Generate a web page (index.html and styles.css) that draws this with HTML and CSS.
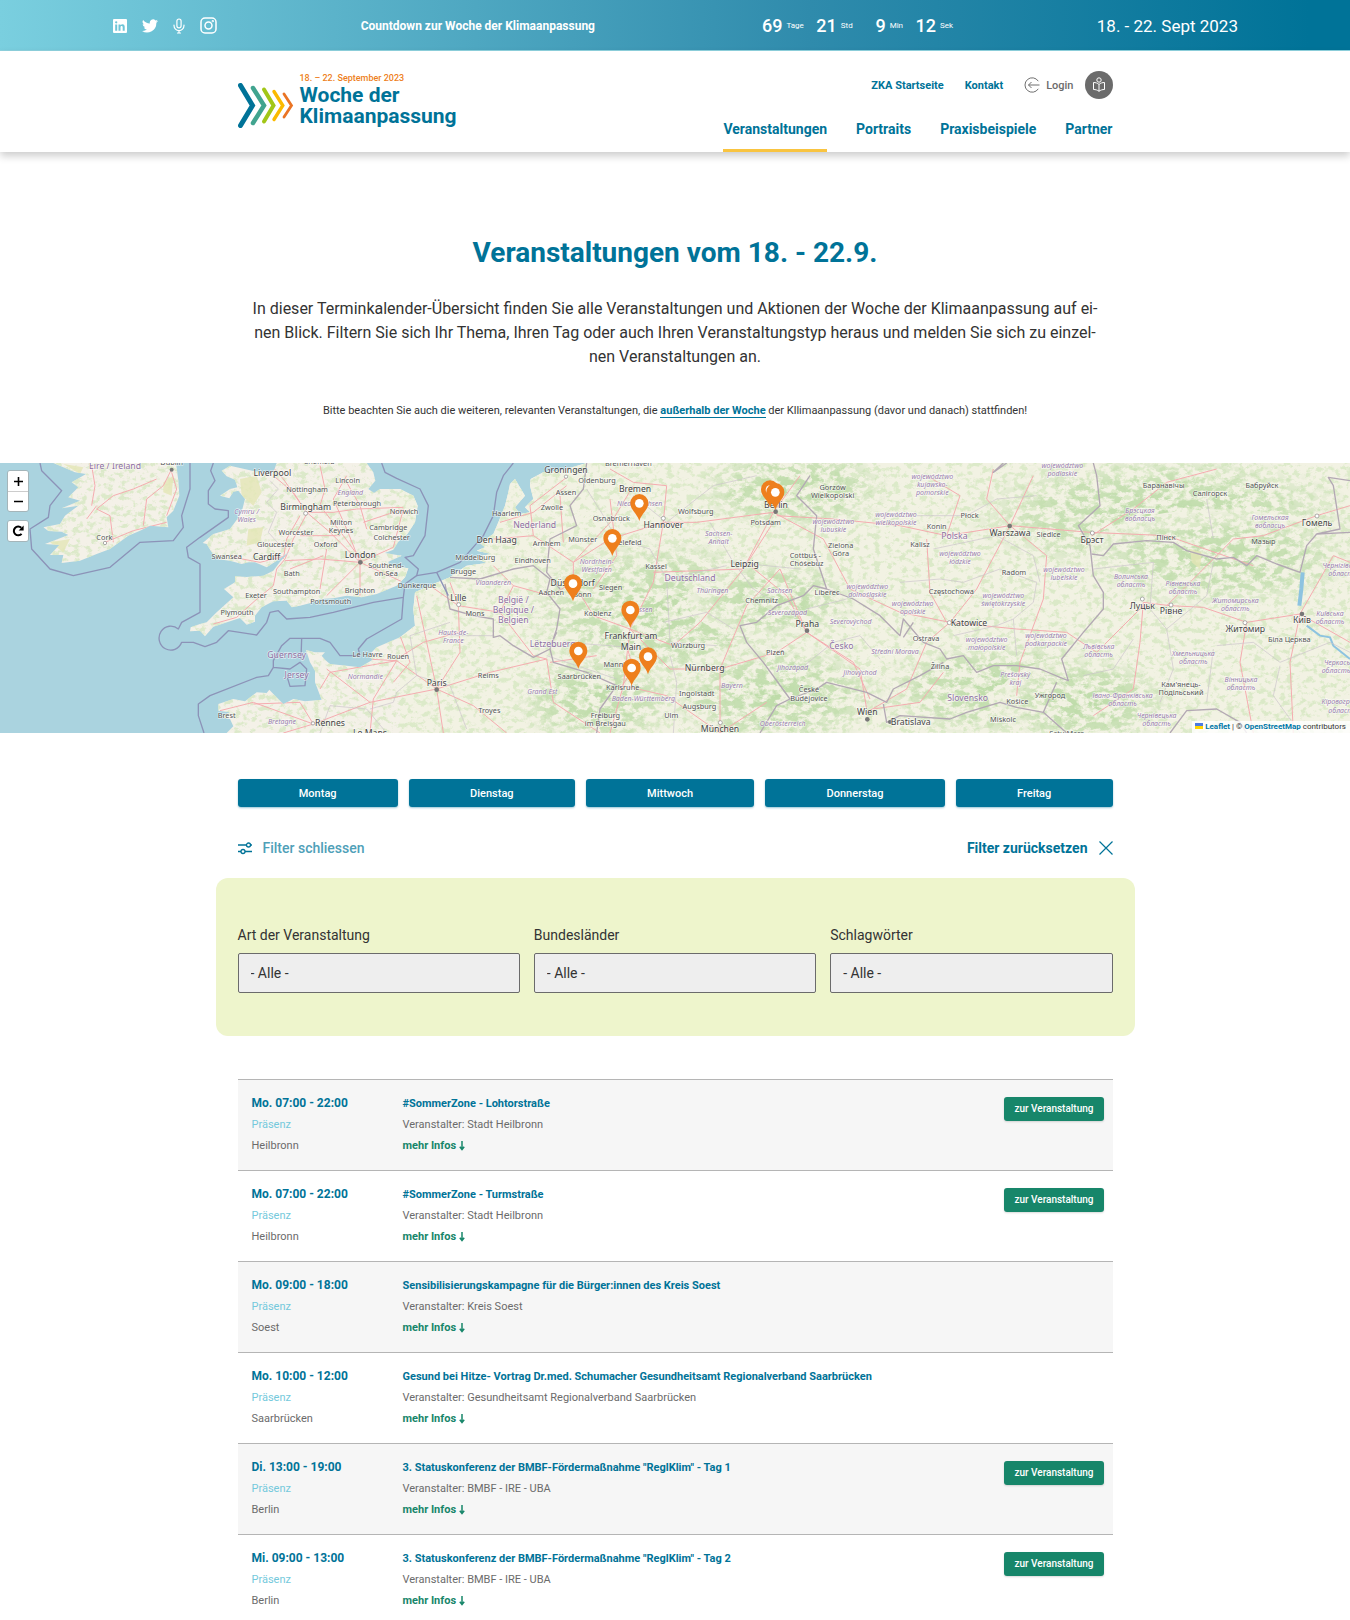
FILE: index.html
```html
<!DOCTYPE html>
<html lang="de">
<head>
<meta charset="utf-8">
<meta name="viewport" content="width=device-width, initial-scale=1">
<title>Veranstaltungen – Woche der Klimaanpassung</title>
<link rel="stylesheet" href="styles.css">
</head>
<body>
<div class="topbar">
  <div class="social">
    <a href="#" aria-label="LinkedIn"><svg width="14" height="14" viewBox="0 0 14 14"><path fill="#fff" fill-rule="evenodd" d="M1 0h12a1 1 0 0 1 1 1v12a1 1 0 0 1-1 1H1a1 1 0 0 1-1-1V1a1 1 0 0 1 1-1ZM2.2 5.4v6.400h2V5.400ZM3.200 2.200a1.150 1.150 0 1 0 0 2.300a1.150 1.150 0 1 0 0-2.300ZM5.500 5.400v6.400h2V8.300c0-1.700 2.200-1.800 2.200 0v3.500h2V7.700c0-3-3-3.100-4.200-1.500v-.8Z"/></svg></a>
    <a href="#" aria-label="Twitter"><svg width="16" height="14" viewBox="0 0 24 20"><path fill="#fff" d="M24 2.400a9.800 9.800 0 0 1-2.800.8A4.900 4.900 0 0 0 23.300.5a9.900 9.900 0 0 1-3.100 1.200 4.900 4.900 0 0 0-8.400 4.500A14 14 0 0 1 1.700 1a4.900 4.900 0 0 0 1.500 6.600 4.900 4.900 0 0 1-2.200-.6 4.900 4.900 0 0 0 3.900 4.900 5 5 0 0 1-2.200.1 4.900 4.900 0 0 0 4.600 3.400A9.900 9.900 0 0 1 0 17.500 14 14 0 0 0 21.500 5a10 10 0 0 0 2.500-2.600Z"/></svg></a>
    <a href="#" aria-label="Podcast"><svg width="12" height="16" viewBox="0 0 12 16" fill="none" stroke="#fff" stroke-width="1.200" stroke-linecap="round"><rect x="3.900" y="1" width="4.200" height="8.800" rx="2.100"/><path d="M1 7v.6a5 5 0 0 0 10 0V7M6 12.600V15M4.500 15h3"/></svg></a>
    <a href="#" aria-label="Instagram"><svg width="17" height="17" viewBox="0 0 17 17" fill="none" stroke="#fff" stroke-width="1.500"><rect x="1" y="1" width="15" height="15" rx="4"/><circle cx="8.500" cy="8.500" r="3.500"/><circle cx="12.800" cy="4.200" r=".4"/></svg></a>
  </div>
  <strong class="claim">Countdown zur Woche der Klimaanpassung</strong>
  <div class="countdown">
    <span><b>69</b><small>Tage</small></span>
    <span><b>21</b><small>Std</small></span>
    <span><b>9</b><small>Min</small></span>
    <span><b>12</b><small>Sek</small></span>
  </div>
  <span class="date">18. - 22. Sept 2023</span>
</div>

<header class="header">
  <div class="wrap header-in">
    <a class="logo" href="#">
      <svg width="56" height="45" viewBox="0 0 56 45" fill="none" stroke-linecap="round" stroke-linejoin="miter">
        <path stroke="#007398" stroke-width="5" d="M2.500 2.500 14.500 22.500 2.500 42.500"/>
        <path stroke="#41a48f" stroke-width="4.500" d="M15 5 26 22.500 15 40"/>
        <path stroke="#a2c617" stroke-width="4" d="M26 6.500 35.500 22.500 26 38.500"/>
        <path stroke="#fbba00" stroke-width="3.400" d="M36 8.500 44.800 22.500 36 36.500"/>
        <path stroke="#ea7424" stroke-width="2.800" d="M46 11 53.500 22.500 46 34"/>
      </svg>
      <span class="logo-text"><small>18. – 22. September 2023</small><b>Woche der</b><b>Klimaanpassung</b></span>
    </a>
    <div class="navs">
      <nav class="meta" aria-label="Service">
        <a href="#">ZKA Startseite</a>
        <a href="#">Kontakt</a>
        <a href="#" class="login"><svg width="16" height="16" viewBox="0 0 16 16" fill="none" stroke="#6f6f6f" stroke-width="1"><path d="M14.300 4.200A7.200 7.200 0 1 0 14.300 11.800M15.500 8H4.500M7.500 5 4.500 8l3 3"/></svg>Login</a>
        <a href="#" class="easy" aria-label="Leichte Sprache"><svg width="16" height="16" viewBox="0 0 16 16" fill="none" stroke="#fff" stroke-width="1"><circle cx="8" cy="3" r="2.200"/><path d="M8 7.500C6.500 6 4.500 5.500 2.500 5.500v7C4.500 12.500 6.500 13 8 14.300 9.500 13 11.500 12.500 13.500 12.500v-7C11.500 5.500 9.500 6 8 7.500Zm0 0v6.800"/></svg></a>
      </nav>
      <nav class="main-nav" aria-label="Hauptmenü">
        <a href="#" class="active" aria-current="page">Veranstaltungen</a>
        <a href="#">Portraits</a>
        <a href="#">Praxisbeispiele</a>
        <a href="#">Partner</a>
      </nav>
    </div>
  </div>
</header>

<main>
  <section class="wrap intro">
    <h1>Veranstaltungen vom 18. - 22.9.</h1>
    <p class="lead">In dieser Terminkalender-Übersicht finden Sie alle Veranstaltungen und Aktionen der Woche der Klimaanpassung auf ei-<br>nen Blick. Filtern Sie sich Ihr Thema, Ihren Tag oder auch Ihren Veranstaltungstyp heraus und melden Sie sich zu einzel-<br>nen Veranstaltungen an.</p>
    <p class="note">Bitte beachten Sie auch die weiteren, relevanten Veranstaltungen, die <a href="#">außerhalb der Woche</a> der Kllimaanpassung (davor und danach) stattfinden!</p>
  </section>

  <section class="map" aria-label="Karte der Veranstaltungen">
    <svg class="map-svg" viewBox="0 22 4050 810" preserveAspectRatio="xMidYMid slice">
      <defs>
        <clipPath id="land">
          <path d="M160 22 190 35 225 50 258 55 215 80 235 95 205 125 240 135 185 158 235 150 195 180 180 205 130 215 145 226 185 228 205 238 135 265 178 268 150 298 190 298 185 322 240 315 290 295 330 280 385 240 420 225 450 210 505 215 500 185 520 165 538 120 535 75 528 22Z"/>
          <path d="M665 45 690 30 725 38 760 46 800 52 822 45 830 22H1100L1120 50 1126 75 1105 100 1122 112 1140 100 1200 100 1240 120 1253 150 1245 200 1222 235 1195 258 1180 282 1155 292 1205 300 1165 318 1168 330 1225 338 1215 365 1190 390 1130 415 1085 425 1040 420 1000 428 960 430 940 440 900 450 875 455 860 435 820 437 785 455 765 480 765 498 740 507 720 487 680 500 640 513 615 542 600 525 570 527 572 515 600 505 620 500 650 470 700 425 672 400 705 380 705 362 740 364 790 360 820 345 840 318 868 288 835 312 800 335 765 320 745 320 725 325 690 315 650 310 632 285 620 265 608 262 640 235 690 220 712 190 726 165 735 130 715 105 700 108 688 128 660 120 690 100 712 95 705 72 680 62Z"/>
          <path d="M1760 22 1680 45 1630 50 1592 70 1590 90 1600 130 1575 155 1590 170 1560 175 1545 155 1575 120 1560 95 1545 70 1530 85 1525 110 1515 150 1495 200 1480 235 1440 262 1455 275 1430 285 1475 295 1420 305 1460 322 1400 330 1370 350 1350 365 1300 385 1245 410 1240 460 1245 510 1200 545 1130 575 1105 600 1118 612 1080 635 1040 630 990 625 975 612 965 600 975 590 945 590 918 583 930 620 945 645 945 680 965 732 915 737 880 730 850 745 820 715 808 702 800 712 770 710 735 737 700 730 655 745 655 765 690 770 660 785 690 790 700 812 680 832H4050V22Z"/>
        </clipPath>
        <filter id="wood" x="0" y="0" width="100%" height="100%" color-interpolation-filters="sRGB">
          <feTurbulence type="fractalNoise" baseFrequency="0.05 0.06" numOctaves="5" seed="11"/>
          <feColorMatrix values="0 0 0 0 .84  0 0 0 0 .91  0 0 0 0 .76  6 0 0 0 -3"/>
        </filter>
        <filter id="forest" x="0" y="0" width="100%" height="100%" color-interpolation-filters="sRGB">
          <feTurbulence type="fractalNoise" baseFrequency="0.03 0.045" numOctaves="5" seed="4"/>
          <feColorMatrix values="0 0 0 0 .74  0 0 0 0 .86  0 0 0 0 .66  0 7 0 0 -3.200"/>
        </filter>
        <radialGradient id="fade"><stop offset="0" stop-color="#fff"/><stop offset=".6" stop-color="#bbb"/><stop offset="1" stop-color="#000"/></radialGradient>
        <mask id="dense" maskUnits="userSpaceOnUse" x="0" y="22" width="4050" height="810">
          <g fill="url(#fade)">
            <ellipse cx="3480" cy="180" rx="600" ry="190"/>
            <ellipse cx="3660" cy="310" rx="420" ry="150"/>
            <ellipse cx="3020" cy="700" rx="420" ry="150"/>
            <ellipse cx="3260" cy="740" rx="270" ry="140"/>
            <ellipse cx="1980" cy="470" rx="420" ry="230"/>
            <ellipse cx="1790" cy="730" rx="260" ry="140"/>
            <ellipse cx="2330" cy="720" rx="340" ry="160"/>
            <ellipse cx="2320" cy="430" rx="260" ry="120"/>
            <ellipse cx="2380" cy="100" rx="300" ry="130"/>
          </g>
        </mask>
        <g id="pin"><path fill="#ee7f1d" d="M0 0C-6-22-27-33-27-54A27 27 0 0 1 27-54C27-33 6-22 0 0Z"/><circle cy="-53" r="13" fill="#fff"/></g>
      </defs>

      <rect y="22" width="4050" height="810" fill="#aad3df"/>
      <g clip-path="url(#land)">
        <rect y="22" width="4050" height="810" fill="#f4f1e8"/>
        <rect x="1200" y="22" width="2850" height="810" fill="#f2f2e3"/>
        <rect y="22" width="4050" height="810" filter="url(#wood)" opacity=".8"/>
        <g mask="url(#dense)"><rect y="22" width="4050" height="810" filter="url(#forest)"/></g>
        <path fill="#e3e6b5" opacity=".8" d="M720 70 770 60 785 110 760 150 725 120ZM745 220 790 215 780 260 740 270ZM190 25 250 35 240 55ZM490 80 520 60 515 120 490 110ZM150 260 210 250 190 290ZM3570 280 3605 290 3600 340 3575 320Z"/>
        <g class="road">
          <path d="M515 40 490 90 440 130 430 210M470 70 400 100 340 120 290 160 330 180 340 260M315 260 400 225 500 200M275 30 285 90 275 150M290 150 260 190M515 50 530 100 500 180"/>
          <path d="M815 30 850 70 920 170 990 230 1080 320M960 30 975 100 960 150 1030 240 1085 315M920 175 880 250 855 310 830 340 820 390 765 435 710 485 640 505M855 315 960 310 1080 320M1080 320 980 420M1080 320 1080 420M1080 320 1210 380M1080 320 1180 275 1210 160 1090 200M1080 320 1040 220 1000 130 1040 60M980 280 960 400M860 300 780 320 700 305M920 170 1000 170 1070 160 1210 155M920 170 880 110 820 60M850 310 860 250 900 180M1100 220 1080 150 1040 80M900 240 1020 240M870 340 970 300"/>
          <path d="M1310 700 1190 615 1100 610M1310 700 1280 560 1250 420M1310 700 1380 590 1375 450 1290 390M1310 700 1470 650 1640 610M1310 700 1110 740 940 805 760 740 660 765M1310 700 1330 832M1310 700 1420 750 1520 832M1190 615 1120 730 1110 832M1190 615 990 650 960 700M940 805 900 740 760 745M1110 740 980 640M940 805 850 832M1190 610 1270 560 1375 530M1200 540 1230 620 1180 680"/>
          <path d="M1375 450 1500 470 1600 600 1640 610 1660 740 1800 832M1375 450 1350 380M1500 470 1540 390 1480 330M1540 390 1650 420 1720 380 1720 320 1840 190 1900 90M1480 250 1600 240 1720 320M1500 200 1600 170 1700 90M1600 240 1590 150 1700 65M1720 320 1830 250 1990 200 2090 200 2320 170M1720 380 1780 480 1890 520 1870 690 1830 832M1890 520 2020 570 2100 500 2230 340 2320 170M1890 520 1960 380 1990 200M1960 350 2230 340 2320 200M1890 520 2010 640 2160 640 2160 832M1870 690 2000 720 2160 832M2160 640 2240 450 2340 340 2420 530M2160 832 2300 740M2320 170 2470 250 2550 400M2320 170 2400 60M1990 200 2000 90 1900 80 1830 40M2330 180 2500 190M2250 330 2360 420 2420 530 2580 640 2600 760M2420 530 2330 590 2160 640M1830 130 1850 300 1780 400M1680 120 1690 260M1790 600 1650 620M1880 570 1900 640 1860 700"/>
          <path d="M2420 530 2560 620 2610 730M2600 770 2720 700 2780 560 2850 500 2930 400 3030 210M2500 190 2700 210 2840 240 3030 210 3270 230 3500 240 3760 330M2850 500 2700 470 2550 400M2850 500 3050 520 3200 530M3030 210 2960 130 2980 40M3030 210 3140 300 3130 430 3060 620 3050 720M3030 210 3100 60M3275 240 3400 160 3500 80 3650 40M3430 440 3510 450 3610 455 3740 500 3900 475M3900 475 3870 620 3880 832M3900 475 4050 560M3430 440 3420 560 3400 700 3280 780M3740 500 3720 620 3760 832M3500 450 3700 250 3790 240 3950 180 4050 150M3900 475 4000 300 4050 320M2840 240 2880 120 2780 60M2780 250 2790 410 2840 500M3200 530 3290 590 3430 450M2620 760 2760 740 2830 650"/>
        </g>
        <path fill="none" stroke="#8dc3e0" stroke-width="12" d="M3908 350 3904 400 3898 450"/>
        <path fill="none" stroke="#8dc3e0" stroke-width="6" d="M3920 510 3960 540 3990 545 4000 570 4050 610"/>
        <g class="region">
          <path d="M810 75 835 100 800 140 830 170 805 230 850 280M1110 760 1180 740 1190 710 1250 660 1230 540 1350 500M990 750 1100 760 1160 832M990 750 960 832M1350 540 1480 540M1250 660 1350 690 1400 820M1700 560 1950 580M1640 600 1850 670M2010 600 2030 680 2020 832M1760 100 1810 180 1850 250 1950 280 2000 370 2180 330M1900 120 2000 200 2140 90 2270 60M2130 200 2200 320 2400 340M2200 320 2260 400 2340 450M2000 370 2010 560 2150 570M1990 500 2120 470 2200 520"/>
          <path d="M2700 380 2820 370 2890 380 3000 340 3110 380 3100 440 3040 490 3050 600M2860 540 2990 510 3040 490M2750 180 2900 180 2990 130 3110 120M2800 280 2990 240 3100 300 3120 380M3280 340 3460 320 3450 460 3500 520 3620 420 3640 320M3500 520 3520 640 3480 740M3650 570 3760 560 3840 620 3990 560 4050 590M3640 580 3620 740M3840 630 3820 720 3900 832M3400 550 3340 640 3250 660M3620 130 3640 250M2420 460 2540 430M2400 640 2500 560 2580 540 2640 610"/>
        </g>
        <g class="border">
          <path d="M1350 365 1440 370 1540 340 1600 330 1650 370 1640 410 1680 460 1670 520 1650 580 1600 605 1540 570 1500 540 1480 545 1480 490 1420 480 1350 460 1335 385M1680 400 1640 350 1650 250 1730 210 1710 150 1750 100 1760 22M1650 580 1660 620 1760 650 1850 690 1800 760 1790 832M1650 575 1670 530"/>
          <path d="M2430 60 2390 120 2450 180 2440 280 2480 400 2440 390 2410 420 2330 450 2270 500 2220 510 2240 560 2290 620 2370 730 2330 750 2280 832M2480 400 2560 430 2640 480 2700 540 2710 490 2770 560 2820 580 2840 610 2890 600 2930 650 2980 630 3050 630 3120 640 3180 665 3205 675 3185 610 3250 530 3310 460 3310 410 3280 360 3270 270 3235 210 3300 150 3290 60 3280 22M2370 730 2450 700 2480 680 2600 710 2660 740 2680 700 2760 660 2830 620M2650 745 2660 800 2700 780 2850 790 2900 770 3000 740 3050 755 3130 770 3170 680M3130 770 3200 832M2710 545 2740 500"/>
          <path d="M3275 295 3310 300 3340 265 3440 255 3520 260 3560 285 3650 310 3700 305 3740 330 3770 300 3830 325 3900 350 3920 270 3950 235 4050 230M3950 235 4020 220 4000 90 3985 65 4050 75M3510 832 3560 765 3650 760 3720 800 3740 832M3020 22 2980 50 3010 22"/>
        </g>
      </g>
      <g class="sea-line">
        <path d="M120 22 125 45 185 105 150 150 145 185 90 220 95 280 150 340 220 360 330 335 420 260 520 255 550 215 545 180 570 100 570 22"/>
        <path d="M640 22 632 45 645 75 625 105 625 145 645 160 685 165 685 185 600 245 560 275 565 305 600 325 600 470 545 500 535 520A35 36 0 1 0 545 560L580 560 615 573 650 560 685 525 770 538 800 500 810 470 835 465 860 490 930 485 1000 470 1120 440 1210 425 1215 385 1250 360 1255 340 1215 305 1240 300 1275 240 1285 150 1260 100 1190 68 1155 50 1145 22"/>
        <path d="M1250 360 1310 350 1380 320 1450 240 1480 180 1490 110 1510 60 1540 22M1310 350 1345 420M1210 425 1205 490 1100 550 1075 580 1080 600 1020 600 990 560 960 548 870 548 845 570 820 615 820 635 805 660 770 665 630 720 595 745 595 780 612 832M905 548 903 610M820 635 870 640 900 620 920 640 915 690 870 692 862 665"/>
      </g>
      <g class="dots"><circle cx="515" cy="42" r="6"/><circle cx="1081" cy="320" r="7"/><circle cx="1310" cy="702" r="7"/><circle cx="2421" cy="525" r="7"/><circle cx="3029" cy="211" r="7"/><circle cx="2602" cy="791" r="7"/><circle cx="2670" cy="799" r="6"/><circle cx="3906" cy="475" r="7"/><circle cx="2327" cy="168" r="7"/></g>
      <g class="rings"><circle cx="939" cy="803" r="5"/><circle cx="1990" cy="188" r="6"/><circle cx="2161" cy="801" r="6"/><circle cx="2848" cy="501" r="6"/><circle cx="3427" cy="430" r="6"/><circle cx="3513" cy="448" r="6"/><circle cx="3735" cy="501" r="6"/><circle cx="3951" cy="181" r="6"/><circle cx="3277" cy="232" r="6"/><circle cx="1376" cy="447" r="6"/><circle cx="1698" cy="63" r="5"/><circle cx="315" cy="262" r="5"/><circle cx="917" cy="173" r="6"/></g>

      <g class="town">
        <text x="313" y="253">Cork</text><text x="515" y="28">Dublin</text><text x="958" y="26">Sheffield</text>
        <text x="1043" y="82">Lincoln</text><text x="921" y="110">Nottingham</text><text x="1071" y="152">Peterborough</text><text x="1212" y="174">Norwich</text>
        <text x="1023" y="208">Milton</text><text x="1023" y="232">Keynes</text><text x="1165" y="223">Cambridge</text><text x="1175" y="254">Colchester</text>
        <text x="888" y="239">Worcester</text><text x="827" y="274">Gloucester</text><text x="977" y="275">Oxford</text><text x="680" y="310">Swansea</text>
        <text x="875" y="360">Bath</text><text x="1158" y="338">Southend-</text><text x="1158" y="362">on-Sea</text><text x="1251" y="397">Dunkerque</text>
        <text x="768" y="426">Exeter</text><text x="890" y="416">Southampton</text><text x="1080" y="412">Brighton</text><text x="992" y="446">Portsmouth</text><text x="711" y="477">Plymouth</text>
        <text x="1103" y="603">Le Havre</text><text x="1194" y="611">Rouen</text><text x="680" y="788">Brest</text>
      </g>
      <g class="city">
        <text x="817" y="60">Liverpool</text><text x="917" y="163">Birmingham</text><text x="800" y="312">Cardiff</text><text x="1081" y="307">London</text><text x="1310" y="690">Paris</text><text x="990" y="812">Rennes</text><text x="1110" y="842">Le Mans</text>
      </g>
      <g class="area">
        <text x="1051" y="117">England</text><text x="740" y="174">Cymru /</text><text x="740" y="198">Wales</text><text x="1096" y="669">Normandie</text><text x="846" y="804">Bretagne</text><text x="1360" y="538">Hauts-de-</text><text x="1360" y="562">France</text>
      </g>
      <g class="country"><text x="345" y="39">Éire / Ireland</text><text x="860" y="608">Guernsey</text><text x="890" y="668">Jersey</text></g>

      <g transform="translate(1350)">
        <g class="town">
          <text x="441" y="81">Oldenburg</text><text x="348" y="117">Assen</text><text x="306" y="162">Zwolle</text><text x="170" y="180">Haarlem</text><text x="484" y="197">Osnabrück</text><text x="737" y="175">Wolfsburg</text>
          <text x="398" y="260">Münster</text><text x="530" y="267">Bielefeld</text><text x="290" y="270">Arnhem</text><text x="76" y="312">Middelburg</text><text x="248" y="321">Eindhoven</text><text x="40" y="356">Brugge</text><text x="618" y="340">Kassel</text>
          <text x="304" y="419">Aachen</text><text x="397" y="425">Bonn</text><text x="482" y="404">Siegen</text><text x="443" y="480">Koblenz</text><text x="75" y="480">Mons</text><text x="714" y="577">Würzburg</text><text x="516" y="634">Mannheim</text>
          <text x="388" y="671">Saarbrücken</text><text x="518" y="702">Karlsruhe</text><text x="115" y="667">Reims</text><text x="118" y="771">Troyes</text><text x="466" y="788">Freiburg</text><text x="466" y="812">im Breisgau</text><text x="664" y="788">Ulm</text>
          <text x="740" y="722">Ingolstadt</text><text x="748" y="761">Augsburg</text><text x="947" y="209">Potsdam</text><text x="1148" y="103">Gorzów</text><text x="1148" y="127">Wielkopolski</text><text x="1172" y="278">Zielona</text><text x="1172" y="302">Góra</text>
          <text x="1066" y="306">Cottbus -</text><text x="1070" y="330">Chóśebuz</text><text x="1131" y="419">Liberec</text><text x="935" y="442">Chemnitz</text><text x="976" y="597">Plzeň</text><text x="1077" y="710">České</text><text x="1077" y="736">Budějovice</text><text x="535" y="32">Bremerhaven</text>
        </g>
        <g class="city">
          <text x="348" y="51">Groningen</text><text x="555" y="110">Bremen</text><text x="640" y="217">Hannover</text><text x="140" y="263">Den Haag</text><text x="368" y="390">Düsseldorf</text><text x="25" y="437">Lille</text><text x="543" y="550">Frankfurt am</text><text x="543" y="582">Main</text>
          <text x="764" y="645">Nürnberg</text><text x="810" y="829">München</text><text x="884" y="334">Leipzig</text><text x="978" y="156">Berlin</text><text x="1072" y="514">Praha</text><text x="1252" y="779">Wien</text>
        </g>
        <g class="area">
          <text x="569" y="151">Niedersachsen</text><text x="806" y="241">Sachsen-</text><text x="806" y="266">Anhalt</text><text x="440" y="325">Nordrhein-</text><text x="440" y="349">Westfalen</text><text x="130" y="387">Vlaanderen</text><text x="787" y="412">Thüringen</text><text x="989" y="412">Sachsen</text>
          <text x="575" y="468">Hessen</text><text x="277" y="714">Grand Est</text><text x="580" y="735">Baden-Württemberg</text><text x="846" y="697">Bayern</text><text x="998" y="811">Oberösterreich</text><text x="1028" y="643">Jihozápad</text><text x="1230" y="657">Jihovýchod</text>
          <text x="1012" y="478">Severozápad</text><text x="1202" y="505">Severovýchod</text><text x="1335" y="596">Střední Morava</text><text x="1150" y="206">województwo</text><text x="1150" y="230">lubuskie</text><text x="1252" y="399">województwo</text><text x="1252" y="423">dolnośląskie</text><text x="1338" y="184">województwo</text><text x="1338" y="208">wielkopolskie</text>
        </g>
        <g class="country"><text x="254" y="218">Nederland</text><text x="720" y="376">Deutschland</text><text x="190" y="442">België /</text><text x="190" y="473">Belgique /</text><text x="190" y="503">Belgien</text><text x="308" y="574">Lëtzebuerg</text><text x="1174" y="579">Česko</text></g>
      </g>

      <g transform="translate(2700)">
        <g class="town">
          <text x="209" y="186">Płock</text><text x="110" y="219">Konin</text><text x="60" y="273">Kalisz</text><text x="446" y="245">Siedlce</text><text x="342" y="359">Radom</text><text x="154" y="414">Częstochowa</text><text x="78" y="555">Ostrava</text><text x="120" y="641">Žilina</text>
          <text x="352" y="744">Košice</text><text x="309" y="798">Miskolc</text><text x="450" y="726">Ужгород</text><text x="791" y="98">Баранавічы</text><text x="930" y="120">Салігорск</text><text x="1086" y="96">Бабруйск</text><text x="798" y="252">Пінск</text><text x="1090" y="264">Мазыр</text>
          <text x="1168" y="560">Біла Церква</text><text x="843" y="693">Кам'янець-</text><text x="843" y="718">Подільський</text><text x="500" y="842">Satu Mare</text>
        </g>
        <g class="city">
          <text x="330" y="240">Warszawa</text><text x="576" y="261">Брэст</text><text x="207" y="510">Katowice</text><text x="727" y="460">Луцьк</text><text x="813" y="476">Рівне</text><text x="1036" y="530">Житомир</text><text x="1206" y="503">Київ</text><text x="1251" y="210">Гомель</text><text x="32" y="808">Bratislava</text>
        </g>
        <g class="area">
          <text x="97" y="71">województwo</text><text x="97" y="95">kujawsko-</text><text x="97" y="119">pomorskie</text><text x="487" y="37">województwo</text><text x="487" y="61">podlaskie</text><text x="180" y="300">województwo</text><text x="180" y="324">łódzkie</text><text x="492" y="350">województwo</text><text x="492" y="374">lubelskie</text>
          <text x="310" y="426">województwo</text><text x="310" y="450">świętokrzyskie</text><text x="38" y="452">województwo</text><text x="38" y="476">opolskie</text><text x="260" y="558">województwo</text><text x="260" y="582">małopolskie</text><text x="438" y="548">województwo</text><text x="438" y="572">podkarpackie</text>
          <text x="346" y="663">Prešovský</text><text x="346" y="687">kraj</text><text x="720" y="171">Брэсцкая</text><text x="720" y="195">вобласць</text><text x="1110" y="193">Гомельская</text><text x="1110" y="217">вобласць</text><text x="693" y="369">Волинська</text><text x="693" y="393">область</text>
          <text x="849" y="391">Рівненська</text><text x="849" y="415">область</text><text x="1006" y="442">Житомирська</text><text x="1006" y="466">область</text><text x="596" y="579">Львівська</text><text x="596" y="603">область</text><text x="880" y="601">Хмельницька</text><text x="880" y="625">область</text>
          <text x="1023" y="679">Вінницька</text><text x="1023" y="703">область</text><text x="668" y="726">Івано-Франківська</text><text x="668" y="751">область</text><text x="770" y="787">Чернівецька</text><text x="770" y="811">область</text><text x="1290" y="481">Київська</text><text x="1290" y="505">область</text>
          <text x="1328" y="336">Чернігівська</text><text x="1328" y="360">область</text><text x="1322" y="627">Черкаська</text><text x="1308" y="652">область</text><text x="1340" y="746">Кіровоградська</text><text x="1328" y="771">область</text>
        </g>
        <g class="country"><text x="163" y="251">Polska</text><text x="203" y="736">Slovensko</text></g>
      </g>

      <g class="pins">
        <use href="#pin" x="2310" y="155"/><use href="#pin" x="2326" y="163"/><use href="#pin" x="1918" y="196"/><use href="#pin" x="1837" y="301"/><use href="#pin" x="1719" y="437"/>
        <use href="#pin" x="1891" y="516"/><use href="#pin" x="1735" y="639"/><use href="#pin" x="1944" y="656"/><use href="#pin" x="1895" y="690"/>
      </g>
    </svg>
    <div class="map-tools">
      <div class="tool-group">
        <button type="button" aria-label="Vergrößern"><svg width="9" height="9" viewBox="0 0 9 9"><path stroke="#000" stroke-width="1.600" d="M4.500 0v9M0 4.500h9"/></svg></button>
        <button type="button" aria-label="Verkleinern"><svg width="9" height="9" viewBox="0 0 9 9"><path stroke="#000" stroke-width="1.600" d="M0 4.500h9"/></svg></button>
      </div>
      <div class="tool-group">
        <button type="button" aria-label="Ansicht zurücksetzen"><svg width="12" height="12" viewBox="0 0 12 12"><path fill="none" stroke="#000" stroke-width="2" d="M9.600 8.800A4.400 4.400 0 1 1 9.300 2.800"/><path d="M11.600.4v5H6.600Z"/></svg></button>
      </div>
    </div>
    <div class="credit"><svg width="8" height="6" viewBox="0 0 8 6"><path fill="#4c7be1" d="M0 0h8v3H0z"/><path fill="#ffd500" d="M0 3h8v3H0z"/></svg> <a href="#">Leaflet</a> | © <a href="#">OpenStreetMap</a> contributors</div>
  </section>

  <section class="wrap">
    <div class="days">
      <button type="button">Montag</button>
      <button type="button">Dienstag</button>
      <button type="button">Mittwoch</button>
      <button type="button">Donnerstag</button>
      <button type="button">Freitag</button>
    </div>
    <div class="filter-bar">
      <button type="button" class="filter-close"><svg width="14" height="14" viewBox="0 0 14 14" fill="none" stroke="#007398" stroke-width="1.300"><path d="M0 4h8.500M12.500 4H14M0 10.500h3M7 10.500h7"/><circle cx="10.500" cy="4" r="2"/><circle cx="5" cy="10.500" r="2"/></svg>Filter schliessen</button>
      <button type="button" class="filter-reset">Filter zurücksetzen<svg width="14" height="14" viewBox="0 0 14 14"><path stroke="#007398" stroke-width="1.200" d="m.5.5 13 13M13.500.5l-13 13"/></svg></button>
    </div>
    <form class="filters">
      <label>Art der Veranstaltung<select><option>- Alle -</option></select></label>
      <label>Bundesländer<select><option>- Alle -</option></select></label>
      <label>Schlagwörter<select><option>- Alle -</option></select></label>
    </form>

    <ul class="events">
      <li>
        <div class="when"><b>Mo. 07:00 - 22:00</b><span class="mode">Präsenz</span><span>Heilbronn</span></div>
        <div class="what"><h2>#SommerZone - Lohtorstraße</h2><span>Veranstalter: Stadt Heilbronn</span><a class="more" href="#">mehr Infos<svg width="6" height="10" viewBox="0 0 6 10"><path d="M3 0v8M.8 5.800 3 8.500l2.200-2.700"/></svg></a></div>
        <a class="go" href="#">zur Veranstaltung</a>
      </li>
      <li>
        <div class="when"><b>Mo. 07:00 - 22:00</b><span class="mode">Präsenz</span><span>Heilbronn</span></div>
        <div class="what"><h2>#SommerZone - Turmstraße</h2><span>Veranstalter: Stadt Heilbronn</span><a class="more" href="#">mehr Infos<svg width="6" height="10" viewBox="0 0 6 10"><path d="M3 0v8M.8 5.800 3 8.500l2.200-2.700"/></svg></a></div>
        <a class="go" href="#">zur Veranstaltung</a>
      </li>
      <li>
        <div class="when"><b>Mo. 09:00 - 18:00</b><span class="mode">Präsenz</span><span>Soest</span></div>
        <div class="what"><h2>Sensibilisierungskampagne für die Bürger:innen des Kreis Soest</h2><span>Veranstalter: Kreis Soest</span><a class="more" href="#">mehr Infos<svg width="6" height="10" viewBox="0 0 6 10"><path d="M3 0v8M.8 5.800 3 8.500l2.200-2.700"/></svg></a></div>
      </li>
      <li>
        <div class="when"><b>Mo. 10:00 - 12:00</b><span class="mode">Präsenz</span><span>Saarbrücken</span></div>
        <div class="what"><h2>Gesund bei Hitze- Vortrag Dr.med. Schumacher Gesundheitsamt Regionalverband Saarbrücken</h2><span>Veranstalter: Gesundheitsamt Regionalverband Saarbrücken</span><a class="more" href="#">mehr Infos<svg width="6" height="10" viewBox="0 0 6 10"><path d="M3 0v8M.8 5.800 3 8.500l2.200-2.700"/></svg></a></div>
      </li>
      <li>
        <div class="when"><b>Di. 13:00 - 19:00</b><span class="mode">Präsenz</span><span>Berlin</span></div>
        <div class="what"><h2>3. Statuskonferenz der BMBF-Fördermaßnahme "ReglKlim" - Tag 1</h2><span>Veranstalter: BMBF - IRE - UBA</span><a class="more" href="#">mehr Infos<svg width="6" height="10" viewBox="0 0 6 10"><path d="M3 0v8M.8 5.800 3 8.500l2.200-2.700"/></svg></a></div>
        <a class="go" href="#">zur Veranstaltung</a>
      </li>
      <li>
        <div class="when"><b>Mi. 09:00 - 13:00</b><span class="mode">Präsenz</span><span>Berlin</span></div>
        <div class="what"><h2>3. Statuskonferenz der BMBF-Fördermaßnahme "ReglKlim" - Tag 2</h2><span>Veranstalter: BMBF - IRE - UBA</span><a class="more" href="#">mehr Infos<svg width="6" height="10" viewBox="0 0 6 10"><path d="M3 0v8M.8 5.800 3 8.500l2.200-2.700"/></svg></a></div>
        <a class="go" href="#">zur Veranstaltung</a>
      </li>
    </ul>
  </section>
</main>
</body>
</html>
```
FILE: styles.css
```css
:root {
  --blue: #007398;
  --green: #17866a;
  --text: #333;
  --grey: #6b6b6b;
}

* { box-sizing: border-box; }

body {
  margin: 0;
  background: #fff;
  color: var(--text);
  font-family: Roboto, "Noto Sans", sans-serif;
  font-size: 11px;
}

a { color: inherit; text-decoration: none; }
svg { display: block; }
h1, h2, p, ul { margin: 0; padding: 0; }
button { font-family: inherit; border: 0; padding: 0; background: none; cursor: pointer; }

.wrap { width: 100%; max-width: 875px; margin: 0 auto; }

/* Countdown bar */
.topbar {
  display: flex;
  align-items: center;
  justify-content: space-between;
  height: 51px;
  padding: 1px 112px 0 113px;
  color: #fff;
  background: linear-gradient(90deg, #7acfdf, #2f8bac 60%, #007398 97%);
  border-bottom: 1px solid #8fd3e0;
}
.social { display: flex; align-items: center; gap: 15px; }
.claim { min-width: 243px; font-size: 12px; font-weight: 700; }
.countdown { display: flex; gap: 12px; margin-left: 14px; }
.countdown span { display: flex; align-items: center; gap: 4px; }
.countdown b { min-width: 21px; font-size: 18px; font-weight: 500; text-align: right; }
.countdown small { font-size: 8px; }
.date { font-size: 17px; }

/* Header */
.header { position: relative; box-shadow: 0 4px 8px rgba(0, 0, 0, .2); }
.header-in { display: flex; justify-content: space-between; height: 101px; padding-top: 20px; }
.logo { display: flex; align-items: flex-start; gap: 6px; color: var(--blue); }
.logo svg { margin-top: 12px; }
.logo-text { display: flex; flex-direction: column; }
.logo-text small { font-size: 9px; font-weight: 500; line-height: 14px; color: #ee7f1d; }
.logo-text b { font-size: 21px; line-height: 21px; }
.navs { display: flex; flex-direction: column; align-items: flex-end; gap: 20px; }
.meta { display: flex; align-items: center; gap: 21px; height: 28px; font-size: 11px; font-weight: 700; color: var(--blue); }
.login { display: flex; align-items: center; gap: 6px; font-weight: 500; color: var(--grey); }
.easy { display: flex; align-items: center; justify-content: center; width: 28px; height: 28px; margin-left: -10px; border-radius: 50%; background: var(--grey); }
.main-nav { display: flex; gap: 29px; font-size: 14px; font-weight: 700; line-height: 20px; color: var(--blue); }
.main-nav a { padding-bottom: 10px; border-bottom: 3px solid transparent; }
.main-nav .active { border-color: #f9c440; }

/* Intro */
.intro { padding: 83px 0 42px; text-align: center; }
h1 { font-size: 28px; font-weight: 700; line-height: 36px; color: var(--blue); }
.lead { margin-top: 26px; font-size: 16px; line-height: 24px; }
.note { margin-top: 32px; font-size: 11px; line-height: 20px; }
.note a { font-weight: 700; color: var(--blue); border-bottom: 1px solid var(--blue); }

/* Map */
.map { position: relative; height: 270px; overflow: hidden; }
.map-svg { width: 100%; height: 100%; }
.map-svg text { font-family: "Noto Sans", sans-serif; text-anchor: middle; paint-order: stroke; stroke: rgba(255, 255, 255, .6); stroke-width: 4px; }
.town { font-size: 22px; fill: #555; }
.city { font-size: 26px; fill: #444; }
.area { font-size: 21px; font-style: italic; fill: #9a7fae; }
.country { font-size: 26px; fill: #8e6fa2; }
.road { fill: none; stroke: #f5acb0; stroke-width: 3; stroke-linejoin: round; }
.region { fill: none; stroke: #ccc4cc; stroke-width: 2; stroke-linejoin: round; }
.border { fill: none; stroke: #b3a8b4; stroke-width: 4; stroke-linejoin: round; }
.sea-line { fill: none; stroke: #8c93b8; stroke-width: 4; stroke-linejoin: round; }
.dots { fill: #777; }
.rings { fill: #fff; stroke: #888; stroke-width: 2; }

.map-tools { position: absolute; top: 7px; left: 7px; display: flex; flex-direction: column; gap: 8px; }
.tool-group { border: 1px solid #a5b5b9; border-radius: 3px; overflow: hidden; }
.tool-group button { display: flex; align-items: center; justify-content: center; width: 20px; height: 20px; background: #fff; }
.tool-group button + button { border-top: 1px solid #ccc; }
.credit { position: absolute; right: 0; bottom: 0; padding: 0 4px 0 3px; background: rgba(255, 255, 255, .8); font-size: 8px; line-height: 12px; }
.credit svg { display: inline-block; }
.credit a { font-weight: 700; color: #0078a8; }

/* Day buttons and filters */
.days { display: flex; gap: 11px; margin-top: 46px; }
.days button { flex: 1 1 auto; height: 28px; border-radius: 3px; background: var(--blue); color: #fff; font-size: 11px; font-weight: 500; box-shadow: 0 1px 2px rgba(0, 115, 152, .4); }
.filter-bar { display: flex; justify-content: space-between; margin: 31px 0 20px; }
.filter-bar button { display: flex; align-items: center; font-size: 14px; line-height: 20px; }
.filter-close { gap: 11px; font-weight: 500; color: #4fa0b8; }
.filter-reset { gap: 11px; font-weight: 700; color: var(--blue); }
.filters { display: grid; grid-template-columns: repeat(3, 1fr); gap: 14px; margin: 0 -22px 43px; padding: 47px 22px 43px; border-radius: 12px; background: #eef5cc; }
.filters label { display: flex; flex-direction: column; gap: 8px; font-size: 14px; line-height: 20px; }
.filters select { appearance: none; width: 100%; height: 40px; padding: 0 12px; border: 1px solid #6b6b6b; border-radius: 2px; background: #eee; color: var(--text); font-family: inherit; font-size: 14px; }

/* Event list */
.events { list-style: none; }
.events li { display: flex; align-items: flex-start; padding: 13px 9px 14px 14px; border-top: 1px solid #b5b5b5; line-height: 21px; color: var(--grey); }
.events li:nth-child(odd) { background: #f6f6f6; }
.events li:last-child { padding-bottom: 8px; }
.when, .what { display: flex; flex-direction: column; align-items: flex-start; }
.when { width: 151px; flex: none; }
.when b { font-size: 12px; color: var(--blue); }
.what { flex: 1; }
.mode { color: #74c9dc; }
h2 { font-size: 11px; font-weight: 700; line-height: 21px; color: var(--blue); }
.more { display: flex; align-items: center; gap: 3px; font-weight: 700; color: var(--green); }
.more path { fill: none; stroke: currentColor; stroke-width: 1.5; }
.go { margin-top: 4px; padding: 0 10px; border-radius: 3px; background: var(--green); color: #fff; font-size: 10px; font-weight: 500; line-height: 24px; box-shadow: 0 1px 2px rgba(0, 0, 0, .15); }
```
